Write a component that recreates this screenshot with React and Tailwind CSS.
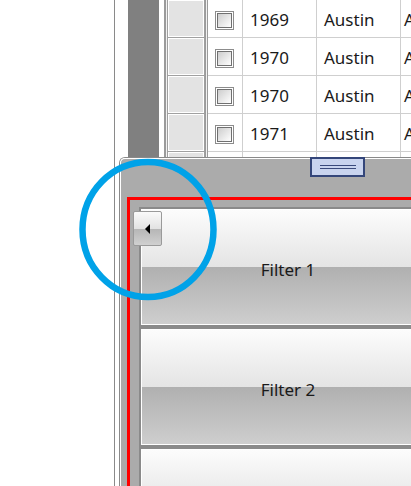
const rows = [
  { year: '1969', city: 'Austin' },
  { year: '1970', city: 'Austin' },
  { year: '1970', city: 'Austin' },
  { year: '1971', city: 'Austin' },
  { year: '1971', city: 'Austin' },
];

// little double-framed checkbox used in the first data column
function CheckBox() {
  return (
    <div className="h-[19px] w-[19px] border border-[#8c8c8c] bg-white p-px">
      <div className="h-full w-full border border-[#707070] bg-[linear-gradient(135deg,#cdcdcd,#ffffff)]" />
    </div>
  );
}

function GridRow({ year, city }) {
  return (
    <div className="flex h-[38px] shrink-0">
      {/* row header */}
      <div className="flex w-[44px] shrink-0">
        <div className="w-[2px] bg-[#9b9b9b]" />
        <div className="w-px bg-[#f2f2f2]" />
        <div className="w-[38px] border-x border-b border-[#a0a0a0]">
          <div className="h-full border border-white bg-[#e3e3e3]" />
        </div>
        <div className="w-[3px] border-x border-[#9b9b9b] bg-[#f2f2f2]" />
      </div>
      <div className="flex w-[35px] shrink-0 items-center border-r border-b border-[#cfcfcf] pl-[7px] pt-[3px]">
        <CheckBox />
      </div>
      <div className="flex w-[74px] shrink-0 items-center border-r border-b border-[#cfcfcf] pl-[7px] pt-[3px]">
        {year}
      </div>
      <div className="flex w-[84px] shrink-0 items-center border-r border-b border-[#cfcfcf] pl-[7px] pt-[3px]">
        {city}
      </div>
      <div className="flex w-[90px] shrink-0 items-center border-b border-[#cfcfcf] pl-[3px] pt-[3px]">
        {city}
      </div>
    </div>
  );
}

function FilterButton({ label }) {
  return (
    <div className="h-[120px] w-[298px] shrink-0 border-2 border-[#8a8a8a]">
      <div className="flex h-full items-center justify-center border border-white bg-[linear-gradient(to_bottom,#fcfcfc_0%,#e4e4e4_50%,#b0b0b0_50%,#cecece_100%)] pt-[6px] text-[17px] text-[#1a1a1a]">
        {label}
      </div>
    </div>
  );
}

export default function App() {
  return (
    <div className="relative flex h-[486px] w-[411px] overflow-hidden bg-white font-['Noto_Sans',sans-serif] text-[17px] text-[#1a1a1a]">
      <div className="w-[114px] shrink-0" />

      <div className="flex h-full w-[420px] shrink-0 flex-col border-l border-[#8a8a8a]">
        {/* upper area: side strip + data grid */}
        <div className="flex h-[157px] shrink-0">
          <div className="w-[13px] shrink-0 bg-white" />
          <div className="w-[31px] shrink-0 bg-[#808080]" />
          <div className="w-[5px] shrink-0 bg-white" />
          <div className="flex flex-1 flex-col overflow-hidden">
            {rows.map((r, i) => (
              <GridRow key={i} year={r.year} city={r.city} />
            ))}
          </div>
        </div>

        {/* lower docked panel */}
        <div className="ml-[4px] flex-1 rounded-tl-[6px] border-l border-t border-[#8a8a8a]">
          <div className="h-full rounded-tl-[5px] border-l border-t border-white bg-[#ababab] pl-[6px]">
            <div className="-mt-[2px] mb-[20px] ml-[183px] flex h-[20px] w-[55px] flex-col items-center justify-center gap-[2px] border-2 border-[#34467a] bg-[#c9d4ef]">
              <div className="h-px w-[36px] bg-[#3a4a7c]" />
              <div className="h-px w-[36px] bg-[#3a4a7c]" />
            </div>

            <div className="relative h-[400px] border-[3px] border-[#ff0000] pl-[9px] pt-[7px]">
              <div className="flex flex-col">
                <FilterButton label="Filter 1" />
                <FilterButton label="Filter 2" />
                <FilterButton label="Filter 3" />
              </div>

              {/* collapse toggle sitting over the first button */}
              <div className="absolute left-[3px] top-[11px] flex h-[35px] w-[29px] items-center justify-center rounded-[2px] border border-[#9a9a9a] bg-[linear-gradient(to_bottom,#fafafa_0%,#e2e2e2_52%,#b6b6b6_52%,#d0d0d0_100%)]">
                <svg width="5" height="10" viewBox="0 0 5 10">
                  <path d="M0 5 L5 0 L5 10 Z" fill="#000" />
                </svg>
              </div>
            </div>
          </div>
        </div>
      </div>

      {/* annotation ring */}
      <svg className="pointer-events-none absolute left-0 top-0" width="411" height="486">
        <ellipse cx="148" cy="229.5" rx="65.5" ry="67.5" fill="none" stroke="#00a2e8" strokeWidth="6.5" />
      </svg>
    </div>
  );
}
